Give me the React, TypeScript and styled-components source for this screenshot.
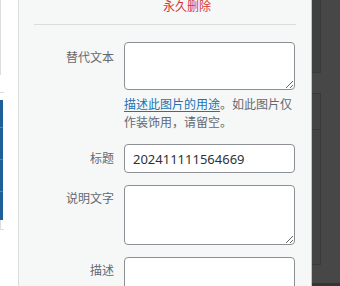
import React from 'react'
import styled, { createGlobalStyle } from 'styled-components'

const GlobalStyle = createGlobalStyle`
  html,
  body {
    margin: 0;
    padding: 0;
  }
  body {
    width: 340px;
    height: 286px;
    overflow: hidden;
    background: #474747;
    font-family: "Noto Sans", "Noto Sans CJK SC", sans-serif;
  }
`

const Screen = styled.div`
  display: flex;
  width: 340px;
  height: 286px;
  overflow: hidden;
`

// sliver of the admin page behind the modal, on the left
const PageEdge = styled.div`
  flex: none;
  width: 18px;
  background: #fff;
  display: flex;
  flex-direction: column;
`

const EdgeLine = styled.div`
  width: 1px;
  height: 75px;
  background: #dcdcde;
`

const MenuBox = styled.div`
  margin-top: 17px;
  width: 4px;
  border-top: 1px solid #dcdcde;
  padding-top: 7px;
  display: flex;
  flex-direction: column;
`

const MenuItem = styled.div<{ $height: number }>`
  width: 3px;
  height: ${(p) => p.$height}px;
  background: #1f5f99;
  & + & {
    border-top: 1px solid #4a86bd;
  }
`

const MenuFoot = styled.div`
  width: 4px;
  height: 10px;
  border-left: 1px solid #dcdcde;
  border-bottom: 1px solid #dcdcde;
  box-sizing: border-box;
`

const Sidebar = styled.aside`
  flex: none;
  box-sizing: border-box;
  width: 294px;
  height: 286px;
  overflow: hidden;
  padding: 0 15px;
  background: #f6f7f7;
  border-left: 1px solid #dcdcde;
  border-right: 1px solid #c3c4c7;
`

const Actions = styled.div`
  margin-top: -2px;
  padding: 0 0 8px 129px;
  border-bottom: 1px solid #dcdcde;
  font-size: 12px;
  line-height: 18px;
`

const DeleteLink = styled.a`
  color: #d63638;
  text-decoration: none;
`

const Settings = styled.div`
  display: grid;
  grid-template-columns: 80px 171px;
  column-gap: 10px;
  row-gap: 12px;
  margin-top: 17px;
`

const Label = styled.label<{ $offset?: number; $center?: boolean }>`
  text-align: right;
  color: #646970;
  font-size: 12px;
  line-height: 18px;
  padding-top: ${(p) => (p.$center ? 0 : p.$offset ?? 5)}px;
  align-self: ${(p) => (p.$center ? 'center' : 'start')};
`

const Field = styled.div`
  display: flex;
  flex-direction: column;
`

const TextArea = styled.textarea<{ $height: number }>`
  display: block;
  box-sizing: border-box;
  width: 171px;
  height: ${(p) => p.$height}px;
  margin: 0;
  padding: 2px 8px;
  border: 1px solid #8c8f94;
  border-radius: 4px;
  background: #fff;
  color: #2c3338;
  font: inherit;
  font-size: 13px;
  resize: vertical;
`

const TextInput = styled.input`
  display: block;
  box-sizing: border-box;
  width: 171px;
  height: 29px;
  margin: 0;
  padding: 0 8px;
  border: 1px solid #8c8f94;
  border-radius: 4px;
  background: #fff;
  color: #2c3338;
  font-family: "Noto Sans", sans-serif;
  font-size: 13px;
`

const Help = styled.p`
  margin: 6px 0 0;
  color: #646970;
  font-size: 12px;
  line-height: 18px;
`

const HelpLink = styled.a`
  color: #2271b1;
  text-decoration: underline;
  text-underline-offset: 2px;
`

// darkened page behind the modal, on the right
const Backdrop = styled.div`
  flex: 1;
  background: #474747;
  display: flex;
  flex-direction: column;
`

const ShadeBox = styled.div<{ $height: number; $gap: number; $dark?: boolean }>`
  box-sizing: border-box;
  width: 9px;
  height: ${(p) => p.$height}px;
  margin-top: ${(p) => p.$gap}px;
  background: ${(p) => (p.$dark ? '#3f4040' : '#444444')};
  border-right: 1px solid #3a3a3a;
  border-bottom: 1px solid #3a3a3a;
  border-top: ${(p) => (p.$gap ? '1px solid #3a3a3a' : 'none')};
`

const ShadeFloor = styled.div`
  margin-top: auto;
  height: 3px;
  background: #353535;
`

export default function App() {
  return (
    <>
      <GlobalStyle />
      <Screen>
        <PageEdge>
          <EdgeLine />
          <MenuBox>
            <MenuItem $height={27} />
            <MenuItem $height={31} />
            <MenuItem $height={31} />
            <MenuItem $height={28} />
          </MenuBox>
          <MenuFoot />
        </PageEdge>

        <Sidebar>
          <Actions>
            <DeleteLink href="#">永久删除</DeleteLink>
          </Actions>

          <Settings>
            <Label $offset={7}>替代文本</Label>
            <Field>
              <TextArea $height={48} />
              <Help>
                <HelpLink href="#">描述此图片的用途</HelpLink>
                。如此图片仅作装饰用，请留空。
              </Help>
            </Field>

            <Label $center>标题</Label>
            <TextInput defaultValue="202411111564669" />

            <Label>说明文字</Label>
            <TextArea $height={60} />

            <Label>描述</Label>
            <TextArea $height={60} />
          </Settings>
        </Sidebar>

        <Backdrop>
          <ShadeBox $height={73} $gap={0} $dark />
          <ShadeBox $height={37} $gap={20} />
          <ShadeBox $height={135} $gap={0} />
          <ShadeFloor />
        </Backdrop>
      </Screen>
    </>
  )
}
